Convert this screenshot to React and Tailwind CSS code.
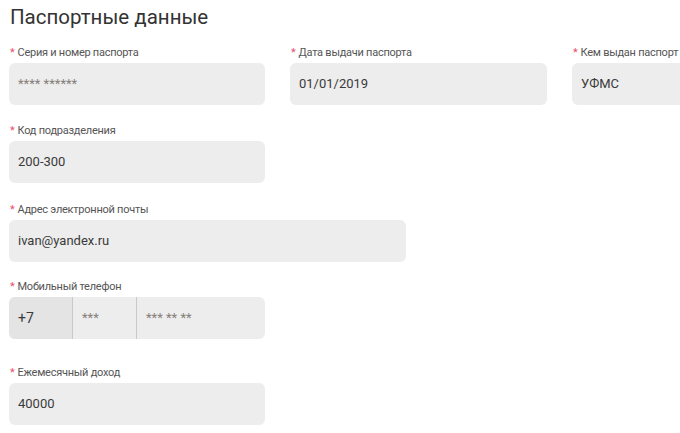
const font = { fontFamily: 'Roboto, "Open Sans", sans-serif' };

function Label({ children }) {
  return (
    <div className="flex items-center h-[17px] pt-px mb-[2px] pl-[1px] text-[11px] leading-4 tracking-[-0.25px] text-[#555]">
      <span className="text-[#e8506a] mr-[3px]">*</span>
      {children}
    </div>
  );
}

function Field({ label, value, placeholder, width = 'w-[256px]' }) {
  return (
    <div className={`${width} shrink-0`}>
      <Label>{label}</Label>
      <div className="h-[42px] rounded-[6px] bg-[#ededed] flex items-center px-[9px] text-[13px]">
        {value ? (
          <span className="text-[#3a3a3a]">{value}</span>
        ) : (
          <span className="text-[#85807a]">{placeholder}</span>
        )}
      </div>
    </div>
  );
}

export default function App() {
  return (
    <div className="w-[680px] h-[433px] overflow-hidden bg-white pl-[9px] pt-[3px]" style={font}>
      <h1 className="text-[20.5px] leading-7 text-[#333] pl-[1px] mb-[13px]">Паспортные данные</h1>

      <div className="flex gap-[25px] whitespace-nowrap">
        <Field label="Серия и номер паспорта" placeholder="**** ******" />
        <Field label="Дата выдачи паспорта" value="01/01/2019" width="w-[257px]" />
        <Field label="Кем выдан паспорт" value="УФМС" />
      </div>

      <div className="mt-[17px]">
        <Field label="Код подразделения" value="200-300" />
      </div>

      <div className="mt-[18px]">
        <Field label="Адрес электронной почты" value="ivan@yandex.ru" width="w-[397px]" />
      </div>

      <div className="mt-[16px] w-[256px]">
        <Label>Мобильный телефон</Label>
        <div className="h-[42px] rounded-[6px] bg-[#ededed] flex overflow-hidden text-[13px]">
          <div className="w-[64px] bg-[#e4e4e4] flex items-center px-[9px] text-[#3a3a3a] text-[14px] border-r border-[#c9c9c9]">+7</div>
          <div className="w-[64px] flex items-center px-[9px] text-[#85807a] border-r border-[#c9c9c9]">***</div>
          <div className="flex-1 flex items-center px-[9px] text-[#85807a]">*** ** **</div>
        </div>
      </div>

      <div className="mt-[25px]">
        <Field label="Ежемесячный доход" value="40000" />
      </div>
    </div>
  );
}
